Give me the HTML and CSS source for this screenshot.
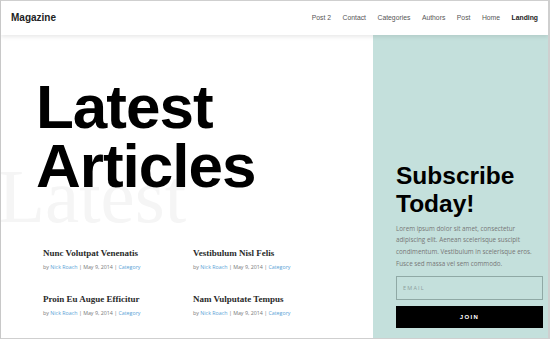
FILE: index.html
```html
<!DOCTYPE html>
<html>
<head>
<meta charset="utf-8">
<link rel="stylesheet" href="styles.css">
</head>
<body>
<div class="frame">
  <header class="header">
    <div class="logo">Magazine</div>
    <nav class="nav">
      <span>Post 2</span>
      <span>Contact</span>
      <span>Categories</span>
      <span>Authors</span>
      <span>Post</span>
      <span>Home</span>
      <span class="active">Landing</span>
    </nav>
  </header>
  <main class="main">
    <section class="left">
      <div class="watermark" aria-hidden="true">Latest</div>
      <h1 class="title">Latest<br>Articles</h1>
      <div class="posts">
        <article class="post">
          <h2>Nunc Volutpat Venenatis</h2>
          <p class="meta">by <a>Nick Roach</a> | May 9, 2014 | <a>Category</a></p>
        </article>
        <article class="post">
          <h2>Vestibulum Nisl Felis</h2>
          <p class="meta">by <a>Nick Roach</a> | May 9, 2014 | <a>Category</a></p>
        </article>
        <article class="post">
          <h2>Proin Eu Augue Efficitur</h2>
          <p class="meta">by <a>Nick Roach</a> | May 9, 2014 | <a>Category</a></p>
        </article>
        <article class="post">
          <h2>Nam Vulputate Tempus</h2>
          <p class="meta">by <a>Nick Roach</a> | May 9, 2014 | <a>Category</a></p>
        </article>
      </div>
    </section>
    <aside class="subscribe">
      <h2 class="sub-title">Subscribe<br>Today!</h2>
      <p class="sub-text">Lorem ipsum dolor sit amet, consectetur adipiscing elit. Aenean scelerisque suscipit condimentum. Vestibulum in scelerisque eros. Fusce sed massa vel sem commodo.</p>
      <div class="email">EMAIL</div>
      <div class="join">JOIN</div>
    </aside>
  </main>
</div>
</body>
</html>
```
FILE: styles.css
```css
* { box-sizing: border-box; }
html, body { margin: 0; padding: 0; background: #fff; }
.frame {
  width: 550px;
  height: 339px;
  border-top: 1px solid #cfcfcf;
  border-left: 1px solid #c8c8c8;
  border-right: 2px solid #cfcfcf;
  border-bottom: 1px solid #cfcfcf;
  overflow: hidden;
  display: flex;
  flex-direction: column;
  font-family: "Liberation Sans", Arial, sans-serif;
}
.header {
  height: 34px;
  flex: none;
  display: flex;
  align-items: center;
  justify-content: space-between;
  padding: 0 10px 0 10px;
  background: #fff;
  box-shadow: 0 2px 4px rgba(0,0,0,0.09);
  position: relative;
  z-index: 2;
}
.logo {
  font-weight: bold;
  font-size: 10px;
  color: #222;
  margin-top: -2px;
}
.nav {
  display: flex;
  gap: 11.5px;
  font-size: 6.8px;
  color: #555;
  margin-top: -2px;
}
.nav .active { font-weight: bold; color: #222; }
.main {
  flex: 1;
  display: grid;
  grid-template-columns: 372px 1fr;
}
.left {
  position: relative;
  padding-top: 42px;
  overflow: hidden;
}
.watermark {
  position: absolute;
  left: -3px;
  top: 123px;
  font-family: "Liberation Serif", "Times New Roman", serif;
  font-size: 77px;
  line-height: 77px;
  color: #f5f5f5;
  z-index: 0;
}
.title {
  position: relative;
  z-index: 1;
  margin: 0 0 0 35px;
  font-size: 62px;
  line-height: 59px;
  letter-spacing: -1px;
  font-weight: bold;
  color: #000;
}
.posts {
  position: relative;
  z-index: 1;
  margin: 52px 0 0 42px;
  display: grid;
  grid-template-columns: 150px 150px;
  row-gap: 21px;
}
.post h2 {
  margin: 0;
  font-family: "Liberation Serif", "Times New Roman", serif;
  font-weight: bold;
  font-size: 9px;
  line-height: 12px;
  color: #2a2a2a;
}
.meta {
  margin: 3px 0 0;
  font-family: "Open Sans", sans-serif;
  font-size: 5.3px;
  line-height: 10px;
  color: #777;
}
.meta a { color: #5a9fd6; }
.subscribe {
  background: #c4e0dc;
  padding: 127px 5px 0 23px;
}
.sub-title {
  margin: 0;
  font-size: 24.5px;
  line-height: 28px;
  font-weight: bold;
  color: #000;
}
.sub-text {
  margin: 4.5px 0 0;
  font-family: "Open Sans", sans-serif;
  font-size: 6.3px;
  line-height: 11.7px;
  color: #777;
  padding-right: 10px;
}
.email {
  margin-top: 7px;
  height: 24px;
  border: 1px solid #8fa9a5;
  display: flex;
  align-items: center;
  padding-left: 6px;
  font-family: "Open Sans", sans-serif;
  font-size: 5.5px;
  letter-spacing: 1.2px;
  color: #8d9f9c;
}
.join {
  margin-top: 6px;
  height: 22px;
  background: #000;
  color: #fff;
  display: flex;
  align-items: center;
  justify-content: center;
  font-size: 6px;
  font-weight: bold;
  letter-spacing: 1.4px;
}
```
